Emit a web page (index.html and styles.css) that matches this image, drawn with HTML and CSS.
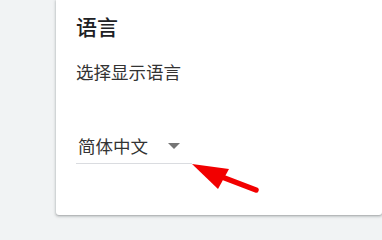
FILE: index.html
```html
<!DOCTYPE html>
<html lang="zh-CN">
<head>
<meta charset="utf-8">
<link rel="stylesheet" href="styles.css">
</head>
<body>
<div class="page">
  <div class="card">
    <h2 class="title">语言</h2>
    <p class="desc">选择显示语言</p>
    <div class="select">
      <span class="value">简体中文</span>
      <span class="caret"></span>
    </div>
  </div>
  <svg class="arrow" width="382" height="220" viewBox="0 0 382 220">
    <line x1="222" y1="177" x2="256" y2="190" stroke="#f20000" stroke-width="5.5" stroke-linecap="round"/>
    <polygon points="192,164 229,169 218,189" fill="#f20000"/>
  </svg>
</div>
</body>
</html>
```
FILE: styles.css
```css
html, body {
  margin: 0;
  padding: 0;
  background: #f1f3f4;
  font-family: "Noto Sans CJK SC", "Noto Sans", sans-serif;
}
.page {
  position: relative;
  width: 382px;
  height: 220px;
  overflow: hidden;
  display: flex;
}
.card {
  margin-left: 56px;
  flex: 1;
  height: 215px;
  background: #fff;
  border-radius: 0 0 3px 3px;
  box-shadow: 0 1px 2px rgba(60,64,67,0.3), 0 1px 3px 1px rgba(60,64,67,0.15);
  padding: 13px 0 0 20px;
  box-sizing: border-box;
  display: flex;
  flex-direction: column;
}
.title {
  margin: 0;
  font-size: 21px;
  line-height: 27px;
  font-weight: 500;
  color: #202124;
}
.desc {
  margin: 21px 0 0 0;
  font-size: 17.5px;
  line-height: 22px;
  color: #333;
}
.select {
  margin-top: 52px;
  width: 116px;
  display: flex;
  align-items: center;
  border-bottom: 1px solid #dadce0;
  padding: 0 0 6px 2px;
  box-sizing: border-box;
}
.value {
  font-size: 17.5px;
  line-height: 22px;
  color: #333;
}
.caret {
  margin-left: 20px;
  width: 0;
  height: 0;
  border-left: 6px solid transparent;
  border-right: 6px solid transparent;
  border-top: 6px solid #757575;
}
.arrow {
  position: absolute;
  left: 0;
  top: 0;
}
```
